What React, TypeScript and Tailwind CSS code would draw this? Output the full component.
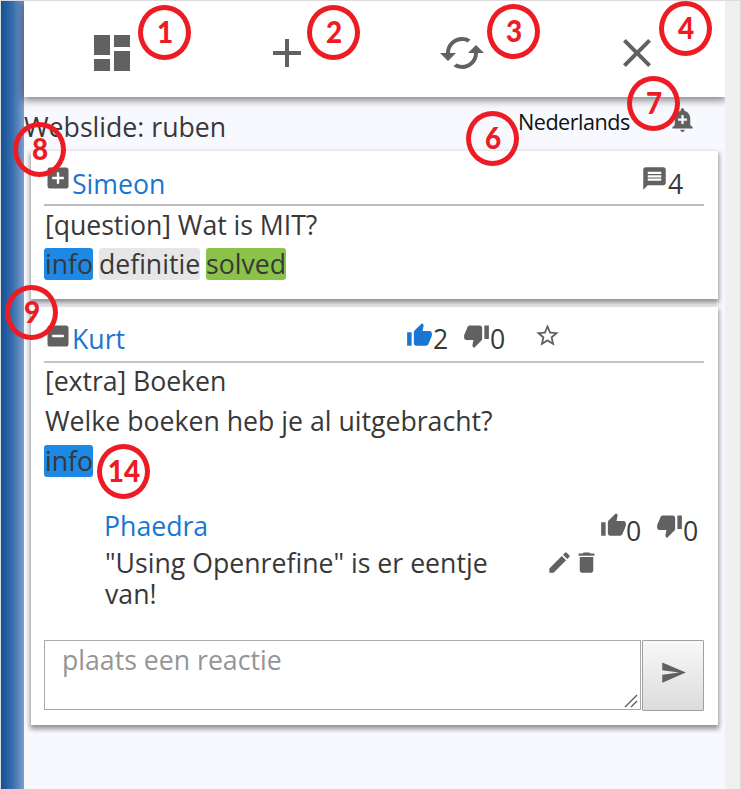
import type { ReactNode } from "react";
import {
  MdAdd,
  MdAddAlert,
  MdAddBox,
  MdCached,
  MdClose,
  MdDashboard,
  MdDelete,
  MdEdit,
  MdIndeterminateCheckBox,
  MdMessage,
  MdSend,
  MdStarBorder,
  MdThumbDown,
  MdThumbUp,
} from "react-icons/md";

function Marker({ n, place }: { n: number; place: string }) {
  return (
    <div
      className={`absolute z-10 flex h-[55px] w-[53px] items-center justify-center rounded-[50%] border-[5px] border-[#ed1c24] pb-[3px] font-['Lato',sans-serif] text-[31px] leading-none font-black text-[#ed1c24] ${place}`}
    >
      <span className="scale-x-90">{n}</span>
    </div>
  );
}

function Card({ children, className }: { children: ReactNode; className: string }) {
  return (
    <section
      className={`ml-[7px] w-[687px] bg-white px-[13px] shadow-[0_3px_5px_1px_rgba(0,0,0,0.42)] ${className}`}
    >
      {children}
    </section>
  );
}

function Tag({ children, className }: { children: ReactNode; className: string }) {
  return (
    <span className={`flex h-[32px] items-center justify-center rounded-[3px] leading-[32px] ${className}`}>
      {children}
    </span>
  );
}

export default function App() {
  return (
    <div className="relative flex h-[789px] w-[741px] overflow-hidden border-t border-l border-[#dcdcdc] bg-[#f8f9fe] font-['Open_Sans',sans-serif] text-[26.67px] leading-[32px] whitespace-nowrap text-[#383838]">
      <div className="w-[23px] shrink-0 bg-linear-to-r from-[#125196] via-[#366dab] to-[#7d9fce]" />
      <main className="w-[701px] shrink-0">
        <header className="grid h-[96px] grid-cols-4 place-items-center bg-white pt-[8px] text-[48px] text-[#616161] shadow-[0_2px_8px_1px_rgba(0,0,0,0.5)]">
          <MdDashboard />
          <MdAdd />
          <MdCached />
          <MdClose />
        </header>

        <div className="flex h-[54px] pt-[14px]">
          <h1 className="w-[494px]">Webslide: ruben</h1>
          <span className="-mt-[5px] w-[151px] text-[21.6px] tracking-[-0.5px] text-[#111]">Nederlands</span>
          <MdAddAlert className="-mt-[5px] text-[27px] text-[#616161]" />
        </div>

        <Card className="h-[148px]">
          <div className="flex h-[53px] w-[660px]">
            <MdAddBox className="mt-[13px] text-[28px] text-[#616161]" />
            <a className="mt-[17px] w-[569px] text-[#1976d2]">Simeon</a>
            <MdMessage className="mt-[14px] text-[27px] text-[#616161]" />
            <span className="mt-[17px]">4</span>
          </div>
          <div className="h-[2px] w-[660px] bg-[#bdbdbd]" />
          <p className="mt-[3px] h-[39px] pl-px tracking-[-0.04px]">[question] Wat is MIT?</p>
          <div className="flex gap-[6px]">
            <Tag className="w-[49px] bg-[#1e88e5] pl-px">info</Tag>
            <Tag className="w-[101px] bg-[#e6e6e6]">definitie</Tag>
            <Tag className="w-[80px] bg-[#8bc34a]">solved</Tag>
          </div>
        </Card>

        <Card className="mt-[8px] h-[418px]">
          <div className="flex h-[54px]">
            <MdIndeterminateCheckBox className="mt-[15px] text-[28px] text-[#616161]" />
            <a className="mt-[16px] w-[334px] text-[#1976d2]">Kurt</a>
            <MdThumbUp className="mt-[15px] text-[27px] text-[#1976d2]" />
            <span className="mt-[16px] w-[30px]">2</span>
            <MdThumbDown className="mt-[15px] text-[27px] text-[#616161]" />
            <span className="mt-[16px] w-[44px]">0</span>
            <MdStarBorder className="mt-[15px] text-[27px] text-[#616161]" />
          </div>
          <div className="h-[2px] w-[660px] bg-[#c4c4c4]" />
          <p className="mt-[2px] h-[40px] pl-px tracking-[-0.06px]">[extra] Boeken</p>
          <p className="h-[40px] pl-px">Welke boeken heb je al uitgebracht?</p>
          <Tag className="w-[49px] bg-[#1e88e5] pl-px">info</Tag>

          <div className="mt-[33px] flex h-[37px] pl-[60px]">
            <a className="w-[496px] text-[#1976d2]">Phaedra</a>
            <MdThumbUp className="mt-[2px] text-[27px] text-[#616161]" />
            <span className="mt-[5px] -ml-px w-[30px]">0</span>
            <MdThumbDown className="mt-[2px] text-[27px] text-[#616161]" />
            <span className="mt-[5px]">0</span>
          </div>
          <div className="flex h-[93px] pl-[60px]">
            <p className="w-[442px] pl-px leading-[31px]">
              "Using Openrefine" is er eentje
              <br />
              van!
            </p>
            <MdEdit className="mt-[2px] text-[27px] text-[#616161]" />
            <MdDelete className="mt-[2px] text-[27px] text-[#616161]" />
          </div>

          <div className="flex w-[660px] gap-[1px]">
            <div className="flex h-[70px] w-[597px] justify-between border border-[#a9a9a9] bg-white pl-[17px]">
              <span className="mt-[3px] text-[#959595]">plaats een reactie</span>
              <svg className="mr-[2px] mb-[1px] size-[14px] self-end" viewBox="0 0 14 14">
                <path d="M1 13L13 1M7 13l6-6" stroke="#555" strokeWidth="1.2" fill="none" />
              </svg>
            </div>
            <button className="flex h-[71px] w-[62px] items-center justify-center rounded-[1px] border border-[#a0a0a0] bg-linear-to-b from-[#f8f8f8] to-[#dcdcdc] pb-[7px] text-[27px] text-[#616161]">
              <MdSend />
            </button>
          </div>
        </Card>
      </main>
      <div className="w-[15px] shrink-0 bg-[#f0f0f0]" />
      <div className="w-[1px] shrink-0 bg-[#dadada]" />

      <Marker n={1} place="left-[137px] top-[4px]" />
      <Marker n={2} place="left-[306px] top-[4px]" />
      <Marker n={3} place="left-[486px] top-[3px]" />
      <Marker n={4} place="left-[658px] top-[0px]" />
      <Marker n={6} place="left-[465px] top-[110px]" />
      <Marker n={7} place="left-[626px] top-[75px]" />
      <Marker n={8} place="left-[12px] top-[121px]" />
      <Marker n={9} place="left-[4px] top-[284px]" />
      <Marker n={14} place="left-[96px] top-[443px]" />
    </div>
  );
}
